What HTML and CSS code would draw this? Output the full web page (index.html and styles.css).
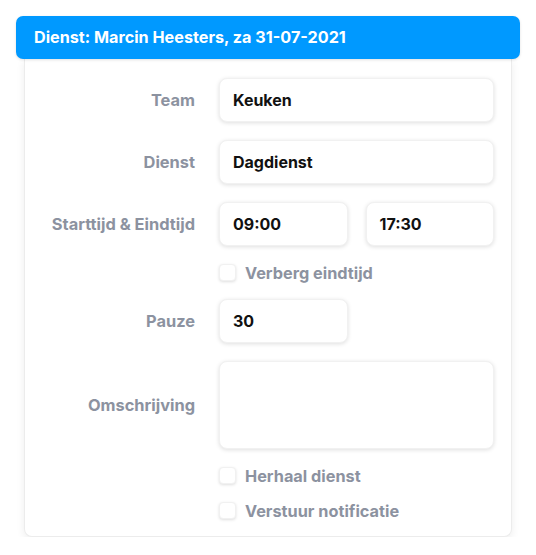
FILE: index.html
```html
<!DOCTYPE html>
<html lang="nl">
<head>
<meta charset="utf-8">
<title>Dienst</title>
<link rel="stylesheet" href="styles.css">
</head>
<body>
<div class="wrap">
  <div class="header">Dienst: Marcin Heesters, za 31-07-2021</div>
  <div class="card">
    <div class="form">
      <div class="label">Team</div>
      <div class="field"><div class="input">Keuken</div></div>

      <div class="label">Dienst</div>
      <div class="field"><div class="input">Dagdienst</div></div>

      <div class="label">Starttijd &amp; Eindtijd</div>
      <div class="field pair">
        <div class="input">09:00</div>
        <div class="input">17:30</div>
      </div>

      <div class="label"></div>
      <div class="field check"><span class="box"></span><span class="check-text">Verberg eindtijd</span></div>

      <div class="label">Pauze</div>
      <div class="field pair"><div class="input">30</div></div>

      <div class="label">Omschrijving</div>
      <div class="field"><div class="textarea"></div></div>

      <div class="label"></div>
      <div class="field check"><span class="box"></span><span class="check-text">Herhaal dienst</span></div>

      <div class="label"></div>
      <div class="field check"><span class="box"></span><span class="check-text">Verstuur notificatie</span></div>
    </div>
  </div>
</div>
</body>
</html>
```
FILE: styles.css
```css
html, body {
  margin: 0;
  padding: 0;
  background: #ffffff;
}
body {
  font-family: Inter, "Noto Sans", sans-serif;
  -webkit-font-smoothing: antialiased;
}
.wrap {
  padding: 16px 16px 0 16px;
  width: 504px;
}
.header {
  position: relative;
  z-index: 1;
  height: 43px;
  box-sizing: border-box;
  background: #0099ff;
  border-radius: 7px;
  color: #ffffff;
  font-weight: 700;
  font-size: 16.2px;
  line-height: 43px;
  padding-left: 18px;
  box-shadow: 0 1px 3px rgba(0, 0, 0, 0.12);
}
.card {
  margin: 0 8px;
  background: #ffffff;
  border: 1px solid #ececec;
  border-top: none;
  border-radius: 0 0 8px 8px;
  box-shadow: 0 3px 8px rgba(0, 0, 0, 0.07);
  padding: 19px 17px 17px 0;
}
.form {
  display: grid;
  grid-template-columns: 170px 1fr;
  column-gap: 24px;
  row-gap: 18px;
  align-items: center;
}
.label {
  text-align: right;
  color: #8c92a0;
  font-weight: 700;
  font-size: 16.4px;
}
.pair {
  display: grid;
  grid-template-columns: 1fr 1fr;
  column-gap: 18px;
}
.input, .textarea {
  background: #ffffff;
  border: 1px solid #f1f1f1;
  border-radius: 8px;
  box-shadow: 0 1px 4px rgba(0, 0, 0, 0.13);
  box-sizing: border-box;
}
.input {
  height: 44px;
  line-height: 42px;
  padding-left: 13px;
  font-weight: 700;
  font-size: 16px;
  color: #111111;
}
.textarea {
  height: 88px;
}
.check {
  display: flex;
  align-items: center;
  height: 17px;
}
.box {
  width: 17px;
  height: 17px;
  box-sizing: border-box;
  border: 1px solid #f1f1f1;
  border-radius: 4px;
  background: #ffffff;
  box-shadow: 0 1px 3px rgba(0, 0, 0, 0.13);
  margin-right: 9px;
  flex: none;
}
.check-text {
  color: #8c92a0;
  font-weight: 700;
  font-size: 16.3px;
}
```
